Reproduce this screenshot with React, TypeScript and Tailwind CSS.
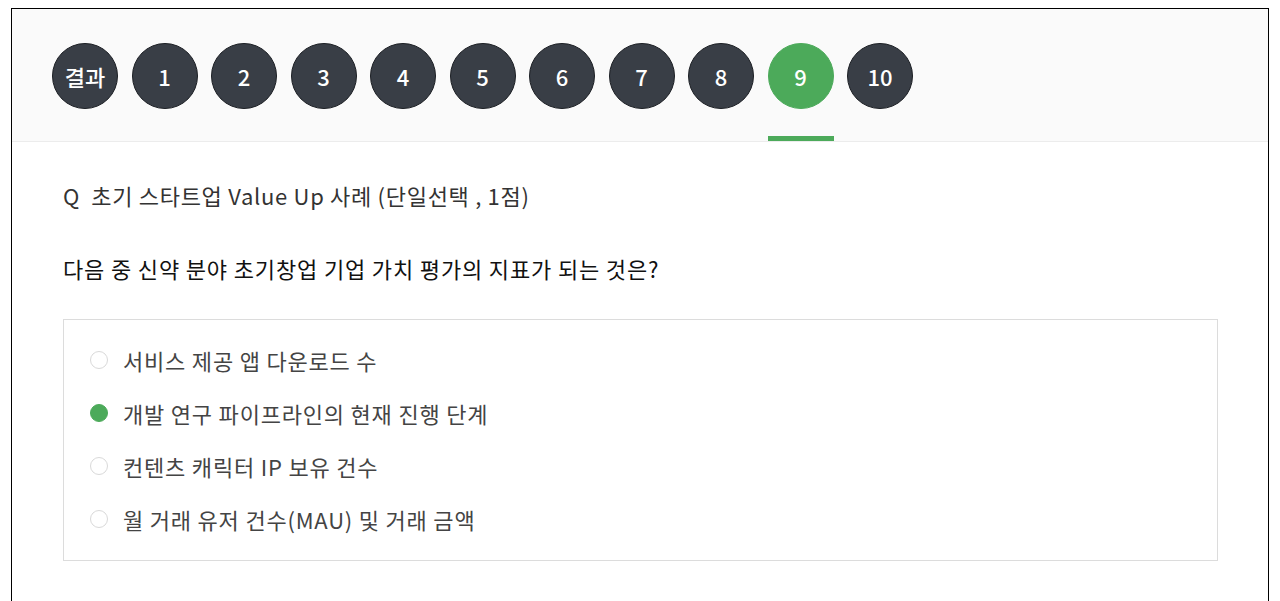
import React from "react";

const tabs = ["결과", "1", "2", "3", "4", "5", "6", "7", "8", "9", "10"];

const options = [
  { id: 1, label: "서비스 제공 앱 다운로드 수", checked: false },
  { id: 2, label: "개발 연구 파이프라인의 현재 진행 단계", checked: true },
  { id: 3, label: "컨텐츠 캐릭터 IP 보유 건수", checked: false },
  { id: 4, label: "월 거래 유저 건수(MAU) 및 거래 금액", checked: false },
];

const font = { fontFamily: '"Noto Sans CJK KR", "Noto Sans", sans-serif' };

export default function App() {
  const active = "9";
  return (
    <div className="min-h-[601px] bg-white pt-[8px] px-[11px]" style={font}>
      <div className="min-h-[620px] border border-black">
        <div className="flex h-[133px] gap-[13.5px] border-b border-[#ececec] bg-[#fafafa] pl-[40px]">
          {tabs.map((t) => (
            <div key={t} className="flex w-[66px] flex-col">
              <div
                className={
                  "mt-[34px] flex h-[66px] w-[66px] items-center justify-center rounded-full border text-[22px] font-medium text-white " +
                  (t === active ? "border-[#4caa5a] bg-[#4caa5a]" : "border-[#1c1f24] bg-[#393e46]")
                }
              >
                {t}
              </div>
              <div className={"mt-auto h-[5px] w-full " + (t === active ? "bg-[#4caa5a]" : "")} />
            </div>
          ))}
        </div>

        <div className="pl-[51px] pr-[50px]">
          <p className="mt-[39px] text-[22px] leading-[28px] tracking-[0.7px] text-[#333]">
            Q&nbsp;&nbsp;초기 스타트업 Value Up 사례 (단일선택 , 1점)
          </p>
          <p className="mt-[45px] text-[22px] leading-[28px] tracking-[0.85px] text-[#111]">
            다음 중 신약 분야 초기창업 기업 가치 평가의 지표가 되는 것은?
          </p>

          <div className="mt-[37px] flex flex-col gap-[23px] border border-[#dcdcdc] pb-[26px] pl-[26px] pt-[25px]">
            {options.map((o) => (
              <label key={o.id} className="flex h-[30px] items-center gap-[15px]">
                <span
                  className={
                    "h-[18px] w-[18px] rounded-full border " +
                    (o.checked ? "border-[#4caa5a] bg-[#4caa5a]" : "border-[#d9d9d9] bg-white")
                  }
                />
                <span className="text-[22px] leading-[30px] tracking-[0.8px] text-[#444]">{o.label}</span>
              </label>
            ))}
          </div>
        </div>
      </div>
    </div>
  );
}
